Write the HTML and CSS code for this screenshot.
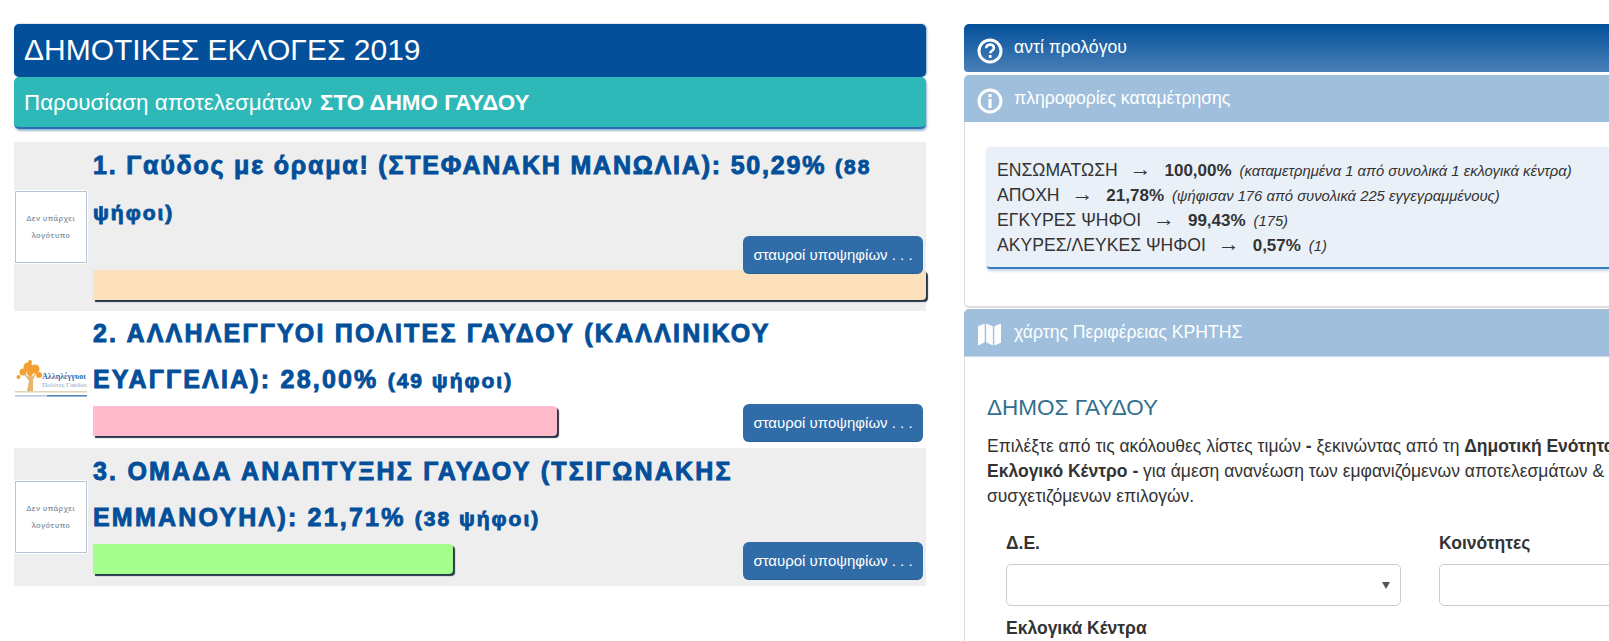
FILE: index.html
```html
<!DOCTYPE html>
<html lang="el">
<head>
<meta charset="utf-8">
<title>Δημοτικές Εκλογές 2019</title>
<link rel="stylesheet" href="styles.css">
</head>
<body>
<div class="page">
  <main class="results">
    <h1 class="title">ΔΗΜΟΤΙΚΕΣ ΕΚΛΟΓΕΣ 2019</h1>
    <h2 class="subtitle">Παρουσίαση αποτελεσμάτων <b>ΣΤΟ ΔΗΜΟ ΓΑΥΔΟΥ</b></h2>
    <div class="list">
      <section class="row row-alt row-first">
        <div class="logo-col"><div class="nologo"><span>Δεν υπάρχει</span><span>λογότυπο</span></div></div>
        <div class="info">
          <h3 class="name">1. Γαύδος με όραμα! (ΣΤΕΦΑΝΑΚΗ ΜΑΝΩΛΙΑ): 50,29% <small>(88 ψήφοι)</small></h3>
          <button class="cross">σταυροί υποψηφίων . . .</button>
          <div class="bar bar-a" style="width:100%"></div>
        </div>
      </section>
      <section class="row">
        <div class="logo-col">
          <svg class="logo" viewBox="0 0 72 72" width="72" height="72">
            <path d="M12 48 L14 38 L8 30 L14 34 L14 27 L17 34 L22 28 L18 37 L18 48 Z" fill="#eab36b"/>
            <g fill="#f3a033">
              <circle cx="13" cy="24" r="4.5"/><circle cx="20" cy="26" r="4.5"/><circle cx="8" cy="29" r="3.5"/><circle cx="15" cy="30" r="3"/><circle cx="24" cy="32" r="3"/><circle cx="15" cy="19" r="2"/><circle cx="3.5" cy="34" r="2"/>
            </g>
            <text x="27" y="36" class="logo-t1">Αλληλέγγυοι</text>
            <text x="27" y="43.5" class="logo-t2">Πολίτες Γαύδου</text>
            <rect x="0" y="48" width="72" height="1.5" fill="#e3d2b5"/>
            <rect x="0" y="52" width="32" height="1.6" fill="#b9cbdc"/>
            <rect x="32" y="52" width="40" height="1.6" fill="#5288b8"/>
          </svg>
        </div>
        <div class="info">
          <h3 class="name name-caps">2. ΑΛΛΗΛΕΓΓΥΟΙ ΠΟΛΙΤΕΣ ΓΑΥΔΟΥ (ΚΑΛΛΙΝΙΚΟΥ ΕΥΑΓΓΕΛΙΑ): 28,00% <small>(49 ψήφοι)</small></h3>
          <button class="cross">σταυροί υποψηφίων . . .</button>
          <div class="bar bar-b" style="width:55.7%"></div>
        </div>
      </section>
      <section class="row row-alt">
        <div class="logo-col"><div class="nologo"><span>Δεν υπάρχει</span><span>λογότυπο</span></div></div>
        <div class="info">
          <h3 class="name name-caps">3. ΟΜΑΔΑ ΑΝΑΠΤΥΞΗΣ ΓΑΥΔΟΥ (ΤΣΙΓΩΝΑΚΗΣ ΕΜΜΑΝΟΥΗΛ): 21,71% <small>(38 ψήφοι)</small></h3>
          <button class="cross">σταυροί υποψηφίων . . .</button>
          <div class="bar bar-c" style="width:43.2%"></div>
        </div>
      </section>
    </div>
  </main>

  <aside class="side">
    <div class="head head-dark">
      <svg class="icon" viewBox="0 0 26 26"><circle cx="13" cy="13" r="11" fill="none" stroke="#fff" stroke-width="3"/><path d="M9.2 10.2c0-2.2 1.7-3.6 3.9-3.6s3.8 1.3 3.8 3.3c0 2.8-3.6 3-3.6 5.4" fill="none" stroke="#fff" stroke-width="2.6"/><rect x="11.8" y="17" width="2.8" height="2.8" fill="#fff"/></svg>
      <span>αντί προλόγου</span>
    </div>
    <div class="head head-light">
      <svg class="icon" viewBox="0 0 26 26"><circle cx="13" cy="13" r="11" fill="none" stroke="#fff" stroke-width="3"/><rect x="11.4" y="6" width="3.2" height="3.2" fill="#fff"/><rect x="11.4" y="11" width="3.2" height="9" fill="#fff"/></svg>
      <span>πληροφορίες καταμέτρησης</span>
    </div>
    <div class="panel panel-stats">
      <div class="stats">
        <p>ΕΝΣΩΜΑΤΩΣΗ <i class="arr">→</i> <b>100,00%</b> <em>(καταμετρημένα 1 από συνολικά 1 εκλογικά κέντρα)</em></p>
        <p>ΑΠΟΧΗ <i class="arr">→</i> <b>21,78%</b> <em>(ψήφισαν 176 από συνολικά 225 εγγεγραμμένους)</em></p>
        <p>ΕΓΚΥΡΕΣ ΨΗΦΟΙ <i class="arr">→</i> <b>99,43%</b> <em>(175)</em></p>
        <p>ΑΚΥΡΕΣ/ΛΕΥΚΕΣ ΨΗΦΟΙ <i class="arr">→</i> <b>0,57%</b> <em>(1)</em></p>
      </div>
    </div>
    <div class="head head-light head-map">
      <svg class="icon icon-map" viewBox="0 0 24 24"><path d="M0 3.5 L7 0.5 V20 L0 23.5 Z M8.5 0.5 L15.5 3.5 V23.5 L8.5 20 Z M17 3.5 L24 0.5 V20.5 L17 23.5 Z" fill="#fff"/></svg>
      <span>χάρτης Περιφέρειας ΚΡΗΤΗΣ</span>
    </div>
    <div class="panel panel-map">
      <h4 class="muni">ΔΗΜΟΣ ΓΑΥΔΟΥ</h4>
      <p class="intro">Επιλέξτε από τις ακόλουθες λίστες τιμών <b>-</b> ξεκινώντας από τη <b>Δημοτική Ενότητα</b> έως το<br><b>Εκλογικό Κέντρο -</b> για άμεση ανανέωση των εμφανιζόμενων αποτελεσμάτων &amp; των<br>συσχετιζόμενων επιλογών.</p>
      <div class="filters">
        <div class="field"><label>Δ.Ε.</label><div class="select"></div></div>
        <div class="field"><label>Κοινότητες</label><div class="select select-plain"></div></div>
        <div class="field"><label>Εκλογικά Κέντρα</label></div>
      </div>
    </div>
  </aside>
</div>
</body>
</html>
```
FILE: styles.css
```css
* { box-sizing: border-box; }
html, body { margin: 0; height: 641px; overflow: hidden; background: #fff; }
body { font-family: "Liberation Sans", Arial, sans-serif; font-size: 17.5px; color: #333; }
h1, h2, h3, h4, p { margin: 0; font-weight: normal; }

.page { display: flex; align-items: flex-start; width: 1700px; padding: 24px 0 0 14px; gap: 37.5px; }
.results { width: 912px; flex: none; }
.side { width: 736px; flex: none; }

.title { height: 53px; padding: 8px 10px; background: #034f9a; color: #fff; font-size: 30px; line-height: 36px; border-radius: 5px; box-shadow: 1px 0 2px rgba(3,79,154,.45); }
.subtitle { height: 52px; padding: 12px 10px 0; background: #2eb8b8; color: #fff; font-size: 22.4px; line-height: 28px; border-bottom: 2px solid #2a6fb5; border-radius: 5px; box-shadow: 1px 2px 2px rgba(3,79,154,.4); }
.subtitle b { margin-left: 2px; }

.list { margin-top: 13px; }
.row { display: flex; }
.row-alt { background: #eee; }
.row-first { margin-bottom: -1px; }
.logo-col { flex: none; width: 79px; padding-left: 1px; display: flex; align-items: center; }
.info { flex: 1; min-width: 0; padding-bottom: 10px; }
.row-first .info { padding-bottom: 11px; }
.info::after { content: ""; display: block; clear: both; }

.name { margin-bottom: 4px; color: #034f9a; font-size: 25px; line-height: 46px; font-weight: bold; letter-spacing: 1.8px; -webkit-text-stroke: .9px #034f9a; }
.name-caps { letter-spacing: 2.2px; }
.name small { font-size: 21px; line-height: 1; letter-spacing: 2px; }

.cross { float: right; margin: -2px 3px -4px 0; position: relative; width: 180px; height: 38px; padding: 0; border: 0; border-bottom: 1px solid #2a5f95; border-radius: 6px; background: #306ca8; color: #fff; font-family: inherit; font-size: 15px; }
.bar { float: left; height: 30px; border-radius: 0 4px 4px 0; box-shadow: 2px 2px 1px #24364a; }
.bar-a { background: #fde0bc; }
.bar-b { background: #ffbbcc; }
.bar-c { background: #a5ff8c; }

.nologo { width: 72px; height: 72px; background: #fff; border: 1px solid #b7c4d4; box-shadow: 0 0 0 1px #fff; display: flex; flex-direction: column; align-items: center; justify-content: center; gap: 2px; font-family: "Noto Sans", sans-serif; font-size: 7.5px; font-weight: 600; line-height: 15px; letter-spacing: .4px; color: #8896aa; }
.logo { display: block; }
.logo-t1 { font-family: "Liberation Serif", serif; font-size: 8px; font-weight: bold; fill: #2c6ea6; }
.logo-t2 { font-family: "Liberation Serif", serif; font-size: 7px; fill: #7fa3c3; }

.head { display: flex; align-items: center; gap: 11px; height: 47.5px; padding-left: 13.5px; color: #fff; font-size: 17.6px; }
.head-dark { background: linear-gradient(#03509a, #4a80b8); border-radius: 5px 5px 0 4px; margin-bottom: 3px; }
.head-light { background: #9fbfdd; border-radius: 5px 0 0 0; }
.head-map { margin-top: 1px; border-bottom: 1px solid #c8d9ea; }
.icon { width: 26px; height: 26px; flex: none; margin-top: 6px; }
.icon-map { width: 23px; height: 23px; margin-top: 5px; margin-left: 1px; margin-right: 2px; }

.panel { border-left: 1px solid #ddd; }
.panel-stats { height: 186px; padding: 25px 0 0 22.5px; border-bottom: 2px solid #ddd; border-radius: 0 0 0 5px; }
.stats { height: 122px; padding: 10.5px 10px 0; background: #eaf0f8; border-bottom: 2px solid #3a7bc0; border-radius: 3px; box-shadow: 0 2px 3px rgba(58,123,192,.3); line-height: 25px; font-size: 17.6px; }
.stats p { height: 25px; white-space: nowrap; }
.stats b { font-weight: bold; font-size: 17px; }
.stats em { margin-left: 3px; font-size: 14.8px; }
.arr { font-style: normal; margin: 0 8px 0 7px; font-size: 22px; line-height: 1; }

.panel-map { padding: 36px 0 0 22.5px; }
.muni { color: #31708f; font-size: 22.5px; line-height: 30px; }
.intro { margin-top: 11px; line-height: 25px; white-space: nowrap; }
.filters { display: grid; grid-template-columns: 395px 395px; column-gap: 38px; margin: 23px 0 0 19px; }
.field label { display: block; font-weight: bold; line-height: 23px; margin-bottom: 9px; }
.select { position: relative; height: 42px; margin-bottom: 11px; background: #fff; border: 1px solid #ccc; border-radius: 5px; }
.select::after { content: ""; position: absolute; right: 10px; top: 17px; border: 4px solid transparent; border-top: 7px solid #555; border-bottom: 0; }
.select-plain::after { display: none; }
```
